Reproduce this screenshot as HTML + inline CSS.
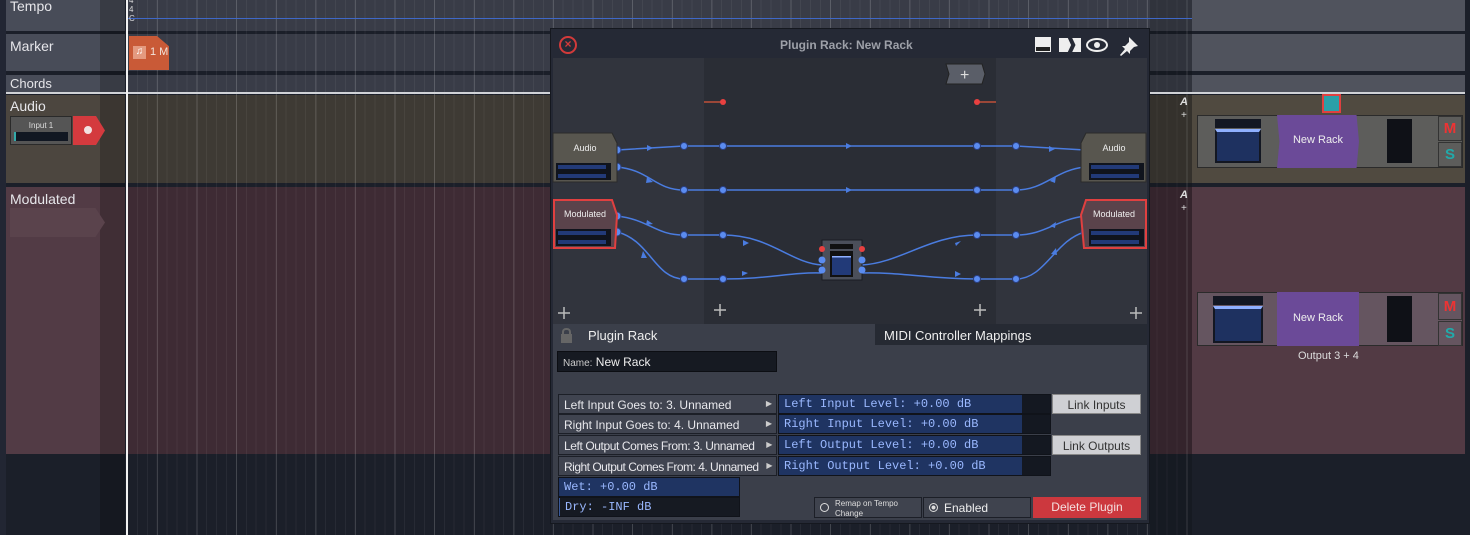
<!DOCTYPE html>
<html><head><meta charset="utf-8"><style>
*{margin:0;padding:0;box-sizing:border-box}
body{width:1470px;height:535px;overflow:hidden;background:#1b1f29;font-family:"Liberation Sans",sans-serif;position:relative}
.a{position:absolute}
.grid{background-image:repeating-linear-gradient(90deg,rgba(255,255,255,.13) 0 1px,transparent 1px 39.6px),repeating-linear-gradient(90deg,rgba(255,255,255,.05) 0 1px,transparent 1px 9.9px);background-position:30px 0,0 0}
.lbl{color:#e6e6ea;font-size:14px}
.row{background:#404450;border:1px solid #1c1f27;color:#e8e8ec;font-size:12px;padding:3px 5px;height:20px;white-space:nowrap;overflow:hidden}
.row span{position:absolute;right:4px;top:4px;font-size:8px;color:#ccc}
.lvl{background:#141821;border:1px solid #10131a;height:20px}
.lvl div{background:#1f3462;height:100%;padding:2px 5px;font-family:"Liberation Mono",monospace;font-size:12px;color:#9ab8ff;white-space:nowrap}
.btn{background:#cfd0d4;color:#333;font-size:12px;text-align:center;padding-top:3px;height:20px;border:1px solid #888}
</style></head><body>
<div class="a" style="left:0;top:0;width:6px;height:535px;background:#222633"></div>
<div class="a" style="left:6px;top:0;width:119px;height:31px;background:#484c58"></div>
<div class="a" style="left:6px;top:34px;width:119px;height:37px;background:#484c58"></div>
<div class="a" style="left:6px;top:75px;width:119px;height:17px;background:#484c58"></div>
<div class="a" style="left:6px;top:95px;width:119px;height:88px;background:#4c463f"></div>
<div class="a" style="left:6px;top:187px;width:119px;height:267px;background:#523b45"></div>
<div class="a" style="left:100px;top:0;width:25px;height:535px;background:rgba(0,0,0,.22)"></div>
<div class="a lbl" style="left:10px;top:-2px">Tempo</div>
<div class="a lbl" style="left:10px;top:38px">Marker</div>
<div class="a lbl" style="left:10px;top:76px;font-size:13px">Chords</div>
<div class="a lbl" style="left:10px;top:98px">Audio</div>
<div class="a lbl" style="left:10px;top:191px">Modulated</div>
<div class="a" style="left:10px;top:116px;width:62px;height:29px;background:#555;border:1px solid #2a2a2a"><div style="color:#ddd;font-size:8px;text-align:center;margin-top:4px">Input 1</div><div style="margin:2px 3px;height:9px;background:#111722;border-left:2px solid #3aa"></div></div>
<div class="a" style="left:73px;top:116px;width:32px;height:29px;background:#d43a3e;clip-path:polygon(0 0,72% 0,100% 50%,72% 100%,0 100%)"><div style="position:absolute;left:11px;top:10px;width:8px;height:8px;border-radius:50%;background:#f2e2e2"></div></div>
<div class="a" style="left:10px;top:208px;width:95px;height:29px;background:#5a434c;clip-path:polygon(0 0,90% 0,100% 50%,90% 100%,0 100%)"></div>
<div class="a" style="left:127px;top:0;width:1065px;height:31px;background:#393c47"></div>
<div class="a" style="left:127px;top:34px;width:1065px;height:37px;background:#393c47"></div>
<div class="a" style="left:127px;top:75px;width:1065px;height:17px;background:#393c47"></div>
<div class="a" style="left:127px;top:95px;width:1065px;height:88px;background:#3e3a34"></div>
<div class="a" style="left:127px;top:187px;width:1065px;height:267px;background:#3e2b34"></div>
<div class="a grid" style="left:127px;top:0;width:1065px;height:535px"></div>
<div class="a" style="left:1150px;top:0;width:42px;height:535px;background:rgba(0,0,0,.15)"></div>
<div class="a" style="left:127px;top:18px;width:1065px;height:1px;background:#3f68c8"></div>
<div class="a" style="left:129px;top:-4px;color:#ddd;font-size:8px;line-height:9px">4<br>4<br>C</div>
<div class="a" style="left:129px;top:36px;width:40px;height:34px;background:#c95a37;clip-path:polygon(0 0,70% 0,100% 30%,100% 100%,0 100%)"><div style="position:absolute;left:4px;top:10px;width:13px;height:13px;background:#e49a80;color:#fff;font-size:10px;text-align:center">♫</div><span style="position:absolute;left:21px;top:10px;color:#f2e4dc;font-size:11px">1 M</span></div>
<div class="a" style="left:6px;top:92px;width:1459px;height:2px;background:#d0d2d6"></div>
<div class="a" style="left:126px;top:0;width:2px;height:535px;background:#f2f2f2"></div>
<div class="a" style="left:1192px;top:0;width:273px;height:31px;background:#50535d"></div>
<div class="a" style="left:1192px;top:34px;width:273px;height:37px;background:#50535d"></div>
<div class="a" style="left:1192px;top:75px;width:273px;height:17px;background:#50535d"></div>
<div class="a" style="left:1192px;top:95px;width:273px;height:88px;background:#504a40"></div>
<div class="a" style="left:1192px;top:187px;width:273px;height:267px;background:#523a44"></div>
<div class="a" style="left:1180px;top:96px;color:#ddd;font-size:11px;font-style:italic;font-weight:bold">A</div>
<div class="a" style="left:1181px;top:110px;color:#ddd;font-size:10px">+</div>
<div class="a" style="left:1180px;top:189px;color:#ddd;font-size:11px;font-style:italic;font-weight:bold">A</div>
<div class="a" style="left:1181px;top:203px;color:#ddd;font-size:10px">+</div>
<div class="a" style="left:1322px;top:94px;width:19px;height:19px;border:2px solid #e04040;background:#2aa0a8"></div>
<div class="a" style="left:1197px;top:115px;width:266px;height:53px;background:#5d5d5b;border:1px solid #2b2b2b"></div>
<div class="a" style="left:1215px;top:119px;width:46px;height:9px;background:#131722"></div>
<div class="a" style="left:1215px;top:129px;width:46px;height:34px;background:#1e3160;border:2px solid #131722;border-top:3px solid #8fb0ff"></div>
<div class="a" style="left:1277px;top:115px;width:82px;height:53px;background:#6b4a98;clip-path:polygon(0 0,97% 0,100% 50%,97% 100%,0 100%,3% 50%);color:#eee;font-size:11px;text-align:center;padding-top:19px">New Rack</div>
<div class="a" style="left:1387px;top:119px;width:25px;height:44px;background:#0f1117"></div>
<div class="a" style="left:1438px;top:116px;width:24px;height:25px;color:#e33;font-weight:bold;font-size:15px;text-align:center;padding-top:3px;background:#5d5d5b;border:1px solid #333">M</div>
<div class="a" style="left:1438px;top:142px;width:24px;height:25px;color:#2aa;font-weight:bold;font-size:15px;text-align:center;padding-top:3px;background:#5d5d5b;border:1px solid #333">S</div>
<div class="a" style="left:1197px;top:292px;width:266px;height:54px;background:#655560;border:1px solid #2b2b2b"></div>
<div class="a" style="left:1213px;top:296px;width:50px;height:9px;background:#131722"></div>
<div class="a" style="left:1213px;top:306px;width:50px;height:37px;background:#1e3160;border:2px solid #131722;border-top:3px solid #8fb0ff"></div>
<div class="a" style="left:1277px;top:292px;width:82px;height:54px;background:#6b4a98;color:#eee;font-size:11px;text-align:center;padding-top:20px">New Rack</div>
<div class="a" style="left:1387px;top:296px;width:25px;height:46px;background:#0f1117"></div>
<div class="a" style="left:1438px;top:293px;width:24px;height:27px;color:#e33;font-weight:bold;font-size:15px;text-align:center;padding-top:4px;background:#655560;border:1px solid #333">M</div>
<div class="a" style="left:1438px;top:321px;width:24px;height:25px;color:#2aa;font-weight:bold;font-size:15px;text-align:center;padding-top:3px;background:#655560;border:1px solid #333">S</div>
<div class="a" style="left:1298px;top:350px;color:#ddd;font-size:11px">Output 3 + 4</div>

<div class="a" style="left:550px;top:28px;width:600px;height:496px;background:#252935;border:1px solid #15181f"></div>
<div class="a" style="left:559px;top:36px;width:18px;height:18px;border:2px solid #d23a3a;border-radius:50%;color:#d23a3a;font-size:12px;font-weight:bold;text-align:center;line-height:13px">×</div>
<div class="a" style="left:780px;top:38px;color:#9da0a8;font-size:12px;font-weight:bold">Plugin Rack: New Rack</div>
<div class="a" style="left:1036px;top:38px;width:14px;height:13px;background:#eee;border-bottom:4px solid #222;outline:1px solid #eee"></div>
<div class="a" style="left:1059px;top:38px;width:22px;height:14px;background:#eee;clip-path:polygon(0 0,40% 0,55% 50%,40% 100%,0 100%,0 0,100% 0,100% 100%,60% 100%,75% 50%,60% 0)"></div>
<div class="a" style="left:1086px;top:38px;width:22px;height:14px;border:2px solid #eee;border-radius:50%"><div style="position:absolute;left:6px;top:2px;width:6px;height:6px;background:#eee;border-radius:50%"></div></div>
<svg class="a" style="left:1118px;top:35px" width="22" height="22"><path d="M11 2 L20 11 L16 12 L12 16 L12 19 L9 16 L3 21 L2 20 L7 14 L4 11 L7 11 L11 7Z" fill="#eee"/></svg>
<div class="a" style="left:553px;top:58px;width:594px;height:266px;background:#31343d"></div>
<div class="a" style="left:704px;top:58px;width:292px;height:266px;background:#2a2d35"></div>
<svg class="a" style="left:0;top:0" width="1470" height="535">
<g fill="none" stroke="#4a7ce0" stroke-width="1.5">
<path d="M617 150 L684 146 L1016 146 L1085 150"/>
<path d="M617 167 C650 170 655 190 684 190 L1016 190 C1045 190 1055 170 1085 167"/>
<path d="M617 216 C650 220 655 235 684 235 L723 235 C770 235 790 263 822 265"/>
<path d="M617 232 C650 240 655 279 684 279 L723 279 C770 279 790 272 822 273"/>
<path d="M862 265 C900 263 930 235 977 235 L1016 235 C1045 235 1055 220 1085 216"/>
<path d="M862 273 C900 272 930 279 977 279 L1016 279 C1045 279 1055 240 1085 232"/>
</g>
<g fill="#4a7ce0">
<path d="M647 145 l6 3 -6 3z"/><path d="M846 143 l6 3 -6 3z"/><path d="M1049 146 l6 3 -6 3z"/>
<path d="M846 187 l6 3 -6 3z"/><path d="M647 177 l6 5 -7 1z"/><path d="M1050 181 l6 -5 -1 7z"/>
<path d="M647 220 l6 4 -7 1z"/><path d="M1050 226 l6 -4 -1 6z"/>
<path d="M643 251 l4 7 -6 0z"/><path d="M1051 254 l5 -6 1 7z"/>
<path d="M743 240 l6 3 -6 3z"/><path d="M742 271 l6 2 -6 3z"/>
<path d="M955 243 l6 -2 -5 5z"/><path d="M955 246 l0 0z"/><path d="M867 267 l0 0z"/><path d="M954 246 l0 0z"/>
<path d="M955 271 l6 3 -6 3z"/>
</g>
<g fill="#5b8cf0" stroke="#2b3f80" stroke-width="1">
<circle cx="617" cy="150" r="4"/><circle cx="617" cy="167" r="4"/><circle cx="617" cy="216" r="4"/><circle cx="617" cy="232" r="4"/>
<circle cx="1085" cy="150" r="4"/><circle cx="1085" cy="167" r="4"/><circle cx="1085" cy="216" r="4"/><circle cx="1085" cy="232" r="4"/>
<circle cx="684" cy="146" r="3.5"/><circle cx="723" cy="146" r="3.5"/><circle cx="977" cy="146" r="3.5"/><circle cx="1016" cy="146" r="3.5"/>
<circle cx="684" cy="190" r="3.5"/><circle cx="723" cy="190" r="3.5"/><circle cx="977" cy="190" r="3.5"/><circle cx="1016" cy="190" r="3.5"/>
<circle cx="684" cy="235" r="3.5"/><circle cx="723" cy="235" r="3.5"/><circle cx="977" cy="235" r="3.5"/><circle cx="1016" cy="235" r="3.5"/>
<circle cx="684" cy="279" r="3.5"/><circle cx="723" cy="279" r="3.5"/><circle cx="977" cy="279" r="3.5"/><circle cx="1016" cy="279" r="3.5"/>
</g>
<line x1="704" y1="102" x2="723" y2="102" stroke="#c0503a" stroke-width="1.5"/><circle cx="723" cy="102" r="3" fill="#e84040"/>
<line x1="977" y1="102" x2="996" y2="102" stroke="#c0503a" stroke-width="1.5"/><circle cx="977" cy="102" r="3" fill="#e84040"/>
<path d="M946 64 L982 64 L985 74 L982 84 L946 84 L949 74Z" fill="#5a5e68" stroke="#222"/>
<text x="960" y="80" fill="#ddd" font-size="16" font-family="Liberation Sans">+</text>
<path d="M553 133 L612 133 L617 143 L617 182 L553 182Z" fill="#58564f" stroke="#2a2a2a"/>
<path d="M1146 133 L1086 133 L1081 143 L1081 182 L1146 182Z" fill="#58564f" stroke="#2a2a2a"/>
<path d="M554 200 L612 200 L617 215 L615 248 L554 248Z" fill="#5a434b" stroke="#e04040" stroke-width="2"/>
<path d="M1146 200 L1086 200 L1081 215 L1084 248 L1146 248Z" fill="#5a434b" stroke="#e04040" stroke-width="2"/>
<g fill="#10141d"><rect x="556" y="163" width="55" height="17"/><rect x="1089" y="163" width="55" height="17"/><rect x="556" y="229" width="55" height="17"/><rect x="1089" y="229" width="55" height="17"/></g>
<g fill="#223a78"><rect x="558" y="165" width="48" height="4"/><rect x="558" y="174" width="48" height="4"/><rect x="1091" y="165" width="48" height="4"/><rect x="1091" y="174" width="48" height="4"/>
<rect x="558" y="231" width="48" height="4"/><rect x="558" y="240" width="48" height="4"/><rect x="1091" y="231" width="48" height="4"/><rect x="1091" y="240" width="48" height="4"/></g>
<g fill="#eee" font-size="9" font-family="Liberation Sans" text-anchor="middle"><text x="585" y="151">Audio</text><text x="1114" y="151">Audio</text><text x="585" y="217">Modulated</text><text x="1114" y="217">Modulated</text></g>
<rect x="822" y="240" width="40" height="40" fill="#4b4f5a" stroke="#1a1c22"/>
<rect x="830" y="244" width="23" height="5" fill="#111"/><rect x="830" y="251" width="23" height="26" fill="#111"/><rect x="832" y="256" width="19" height="19" fill="#223a78"/><rect x="832" y="256" width="19" height="1.5" fill="#8fb0ff"/>
<circle cx="822" cy="249" r="3" fill="#e84040"/><circle cx="862" cy="249" r="3" fill="#e84040"/>
<g fill="#5b8cf0"><circle cx="822" cy="260" r="3.5"/><circle cx="822" cy="270" r="3.5"/><circle cx="862" cy="260" r="3.5"/><circle cx="862" cy="270" r="3.5"/></g>
<g stroke="#bbb" stroke-width="1.5"><path d="M558 313h12M564 307v12M714 310h12M720 304v12M974 310h12M980 304v12M1130 313h12M1136 307v12"/></g>
</svg>
<div class="a" style="left:553px;top:324px;width:594px;height:196px;background:#3b3f4a"></div>
<div class="a" style="left:875px;top:324px;width:272px;height:21px;background:#262a33"></div>
<div class="a" style="left:562px;top:328px;width:9px;height:14px;border:2px solid #666;border-radius:4px 4px 0 0;border-bottom:none"></div>
<div class="a" style="left:561px;top:334px;width:11px;height:9px;background:#666"></div>
<div class="a" style="left:588px;top:328px;color:#eee;font-size:13px">Plugin Rack</div>
<div class="a" style="left:884px;top:328px;color:#eee;font-size:13px">MIDI Controller Mappings</div>
<div class="a" style="left:557px;top:351px;width:220px;height:21px;background:#161a22;border:1px solid #0c0e13;padding:3px 5px;color:#eee;font-size:12px"><span style="font-size:10px;color:#ccc">Name:</span> New Rack</div>
<div class="a row" style="left:558px;top:394px;width:219px">Left Input Goes to: 3. Unnamed<span>▶</span></div>
<div class="a row" style="left:558px;top:414px;width:219px">Right Input Goes to: 4. Unnamed<span>▶</span></div>
<div class="a row" style="left:558px;top:435px;width:219px;letter-spacing:-.4px">Left Output Comes From: 3. Unnamed<span>▶</span></div>
<div class="a row" style="left:558px;top:456px;width:219px;letter-spacing:-.5px">Right Output Comes From: 4. Unnamed<span>▶</span></div>
<div class="a lvl" style="left:778px;top:394px;width:273px"><div style="width:243px">Left Input Level: +0.00 dB</div></div>
<div class="a lvl" style="left:778px;top:414px;width:273px"><div style="width:243px">Right Input Level: +0.00 dB</div></div>
<div class="a lvl" style="left:778px;top:435px;width:273px"><div style="width:243px">Left Output Level: +0.00 dB</div></div>
<div class="a lvl" style="left:778px;top:456px;width:273px"><div style="width:243px">Right Output Level: +0.00 dB</div></div>
<div class="a btn" style="left:1052px;top:394px;width:89px">Link Inputs</div>
<div class="a btn" style="left:1052px;top:435px;width:89px">Link Outputs</div>
<div class="a lvl" style="left:558px;top:477px;width:182px"><div>Wet: +0.00 dB</div></div>
<div class="a lvl" style="left:558px;top:497px;width:182px;background:#161a22"><div style="background:transparent;border-left:1px solid #3a5a9a">Dry: -INF dB</div></div>
<div class="a" style="left:814px;top:497px;width:108px;height:21px;background:#3f434e;border:1px solid #1c1f27;color:#ddd;font-size:8px;padding:1px 0 0 20px;line-height:10px">Remap on Tempo<br>Change<div style="position:absolute;left:5px;top:5px;width:9px;height:9px;border:1px solid #ddd;border-radius:50%"></div></div>
<div class="a" style="left:923px;top:497px;width:108px;height:21px;background:#3f434e;border:1px solid #1c1f27;color:#eee;font-size:12px;padding:3px 0 0 20px">Enabled<div style="position:absolute;left:5px;top:5px;width:9px;height:9px;border:1px solid #ddd;border-radius:50%;background:radial-gradient(#ddd 35%,transparent 45%)"></div></div>
<div class="a" style="left:1033px;top:497px;width:108px;height:21px;background:#cc383e;color:#f4e0e0;font-size:12px;text-align:center;padding-top:3px">Delete Plugin</div>
</body></html>
